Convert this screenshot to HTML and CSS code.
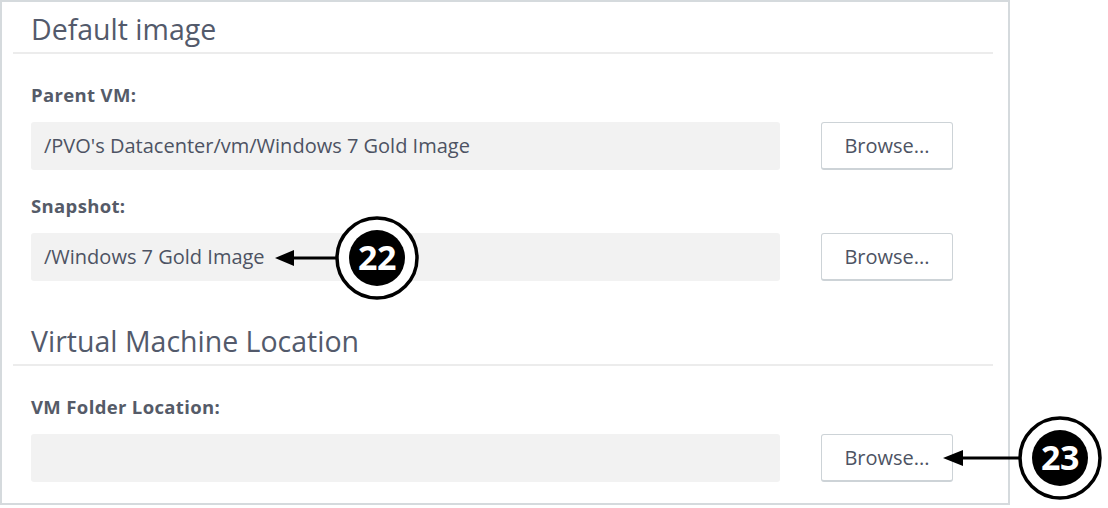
FILE: index.html
```html
<!DOCTYPE html>
<html>
<head>
<meta charset="utf-8">
<link rel="stylesheet" href="styles.css">
</head>
<body>
<div class="page">
  <div class="panel">
    <section class="section">
      <h2 class="section-title">Default image</h2>
      <div class="field">
        <div class="field-label">Parent VM:</div>
        <div class="field-row">
          <div class="input">/PVO's Datacenter/vm/Windows 7 Gold Image</div>
          <button class="btn">Browse...</button>
        </div>
      </div>
      <div class="field">
        <div class="field-label">Snapshot:</div>
        <div class="field-row">
          <div class="input">/Windows 7 Gold Image</div>
          <button class="btn">Browse...</button>
        </div>
      </div>
    </section>
    <section class="section">
      <h2 class="section-title">Virtual Machine Location</h2>
      <div class="field">
        <div class="field-label">VM Folder Location:</div>
        <div class="field-row">
          <div class="input"></div>
          <button class="btn">Browse...</button>
        </div>
      </div>
    </section>
  </div>

  <div class="callout callout-22">
    <svg width="150" height="90" viewBox="0 0 150 90">
      <rect x="20" y="43.5" width="45" height="3" fill="#000"/>
      <polygon points="3,45 22,37 22,53" fill="#000"/>
      <circle cx="105" cy="45" r="40" fill="#fff" stroke="#000" stroke-width="3.5"/>
      <circle cx="105" cy="45" r="28" fill="#000"/>
    </svg>
    <span class="callout-num">22</span>
  </div>

  <div class="callout callout-23">
    <svg width="170" height="90" viewBox="0 0 170 90">
      <rect x="20" y="43.5" width="60" height="3" fill="#000"/>
      <polygon points="3,45 23,37 23,53" fill="#000"/>
      <circle cx="120" cy="45" r="40" fill="#fff" stroke="#000" stroke-width="3.5"/>
      <circle cx="120" cy="45" r="28" fill="#000"/>
    </svg>
    <span class="callout-num">23</span>
  </div>
</div>
</body>
</html>
```

FILE: styles.css
```css
html, body {
  margin: 0;
  padding: 0;
  background: #ffffff;
}

body {
  font-family: "Open Sans", "Noto Sans", sans-serif;
  color: #525968;
}

.page {
  position: relative;
  width: 1108px;
  height: 508px;
}

.panel {
  width: 1006px;
  border: 2px solid #d5dadd;
  padding-bottom: 21px;
}

.section-title {
  margin: 9px 15px 0 11px;
  padding: 0 0 5px 18px;
  font-size: 28.5px;
  line-height: 36px;
  font-weight: 400;
  color: #535a6b;
  border-bottom: 2px solid #ececec;
}

.section + .section .section-title {
  margin-top: 42px;
}

.field {
  padding-left: 29px;
  margin-top: 25px;
}

.section-title + .field {
  margin-top: 30px;
}

.field-label {
  font-size: 18.5px;
  line-height: 22px;
  font-weight: 700;
  letter-spacing: 0.35px;
  color: #555b68;
}

.field-row {
  display: flex;
  align-items: center;
  gap: 41px;
  margin-top: 16px;
}

.input {
  width: 749px;
  height: 48px;
  box-sizing: border-box;
  background: #f2f2f2;
  border-radius: 3px;
  padding-left: 13px;
  font-size: 20px;
  line-height: 48px;
  color: #4d5363;
}

.btn {
  width: 132px;
  height: 48px;
  box-sizing: border-box;
  background: #ffffff;
  border: 1px solid #cdd3d7;
  border-bottom: 2px solid #cdd3d7;
  border-radius: 3px;
  font-family: "Open Sans", "Noto Sans", sans-serif;
  font-size: 20px;
  color: #4d5363;
  padding: 0;
}

.callout {
  position: absolute;
}

.callout svg {
  display: block;
}

.callout-num {
  position: absolute;
  top: 0;
  height: 90px;
  width: 56px;
  line-height: 88px;
  text-align: center;
  color: #ffffff;
  font-family: "Open Sans", sans-serif;
  font-weight: 700;
  font-size: 34px;
  letter-spacing: -0.5px;
}

.callout-22 {
  left: 272px;
  top: 213px;
}

.callout-22 .callout-num {
  left: 77px;
}

.callout-23 {
  left: 940px;
  top: 413px;
}

.callout-23 .callout-num {
  left: 92px;
}
```
